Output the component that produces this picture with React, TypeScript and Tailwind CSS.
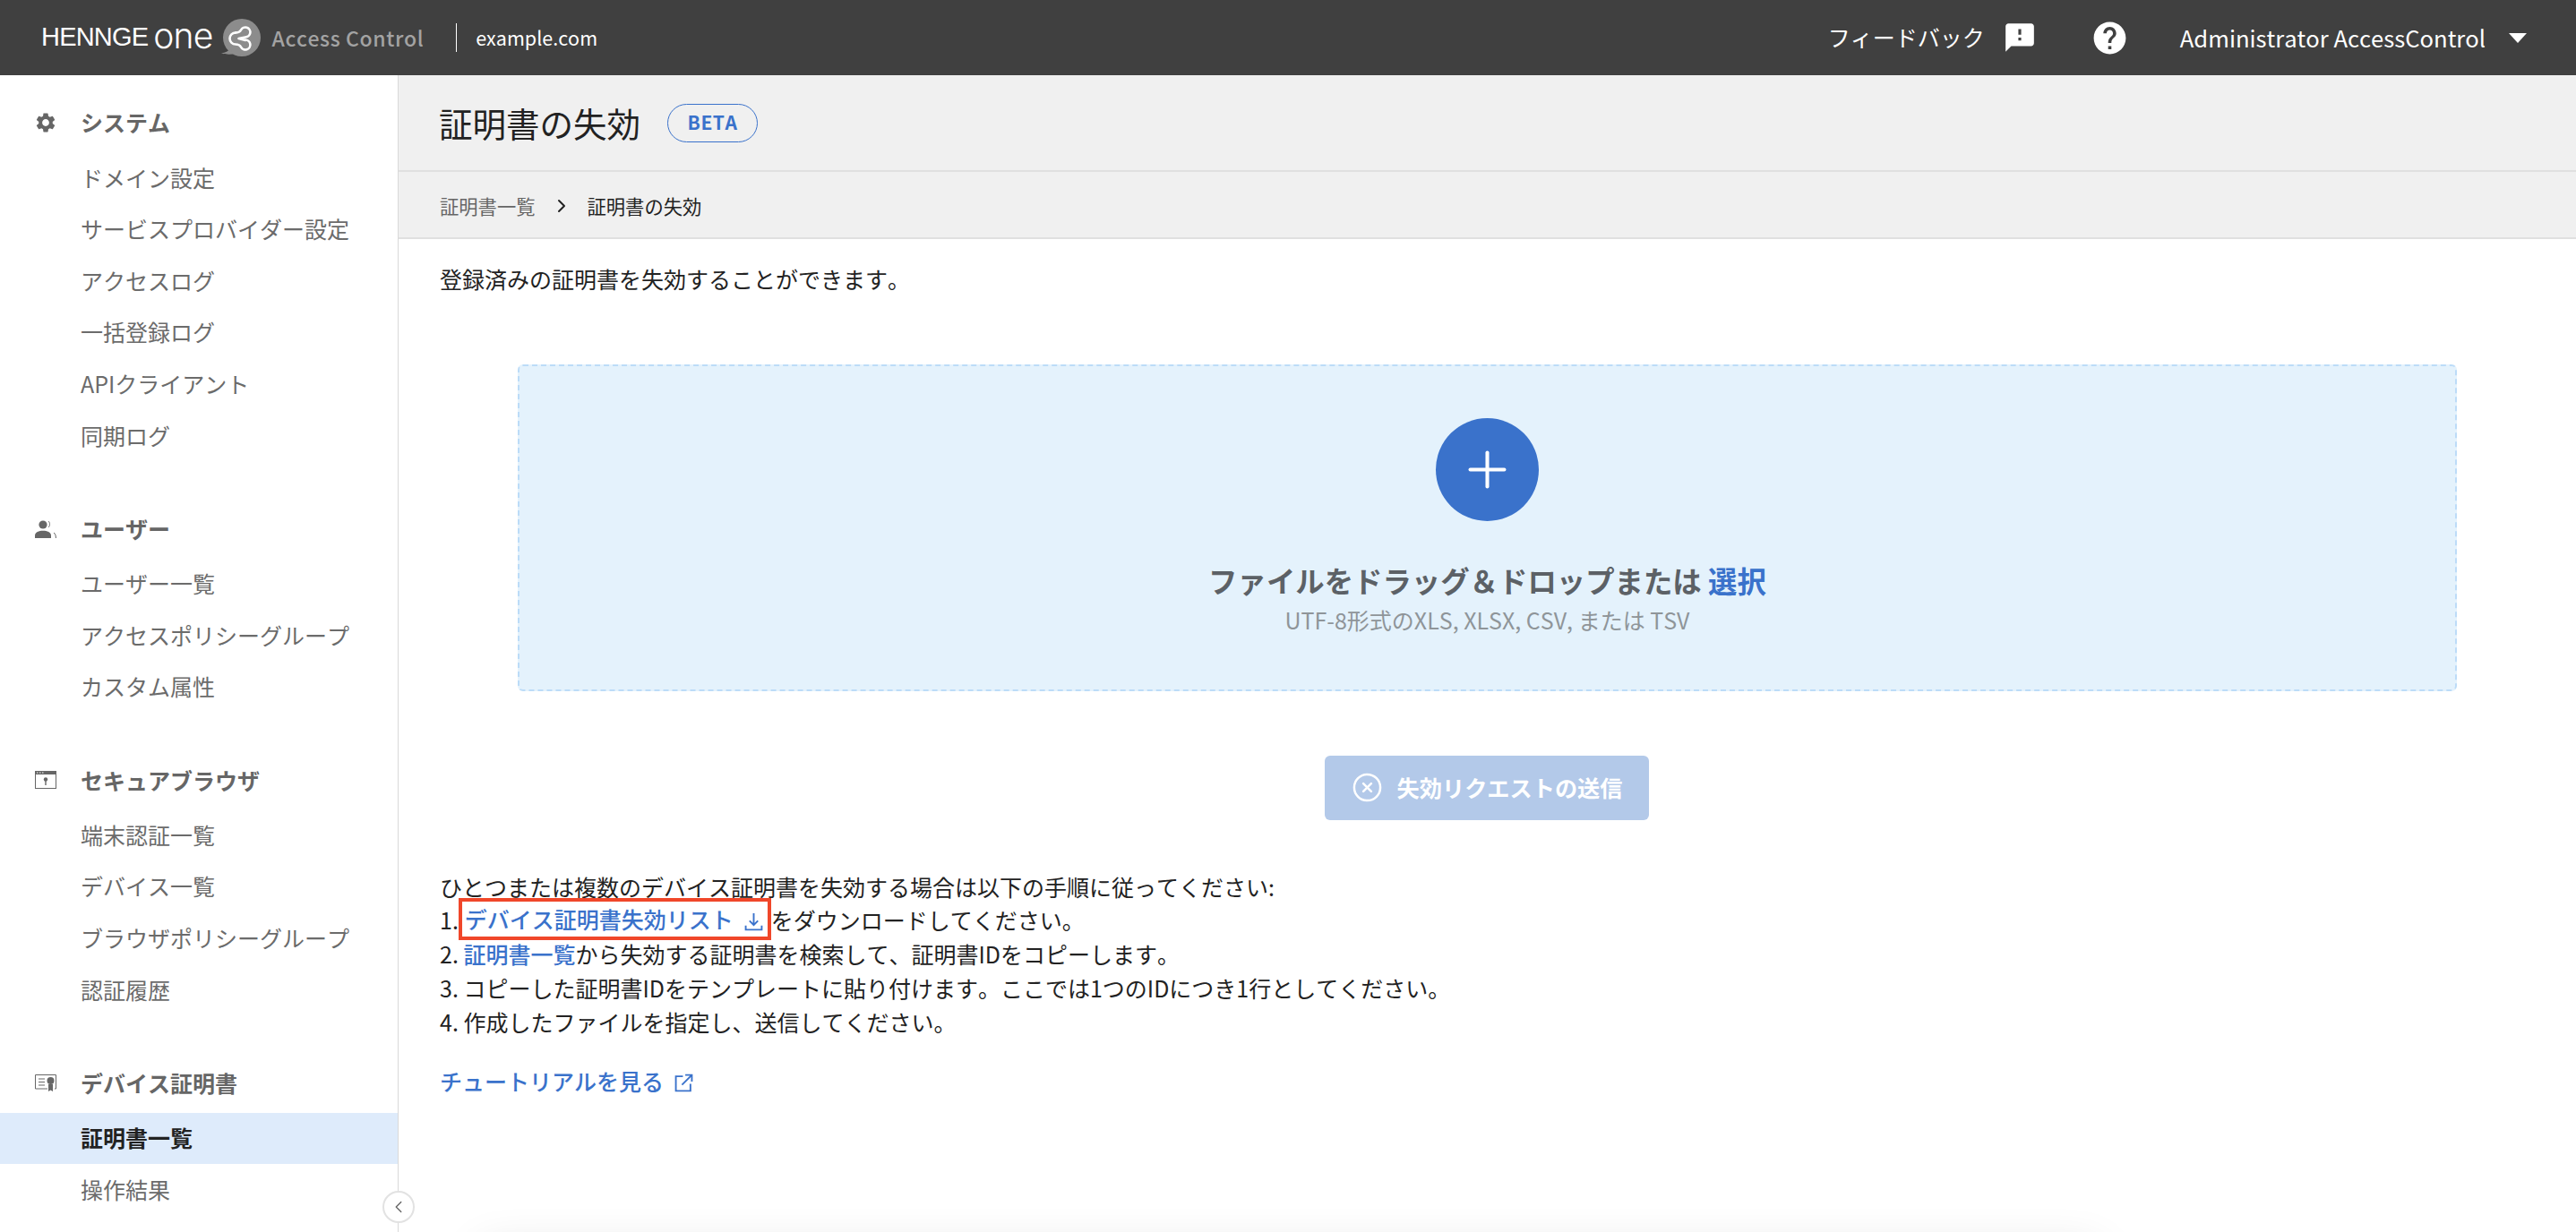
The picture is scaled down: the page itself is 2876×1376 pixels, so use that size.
import { ReactNode } from 'react';
import { MdFeedback, MdHelp, MdSettings } from 'react-icons/md';
import { ChevronLeft, ChevronRight, Plus, CircleX } from 'lucide-react';

function UsersIcon() {
  return (
    <svg viewBox="0 0 24 20" className="h-[20px] w-[24px]" fill="#666">
      <circle cx="9" cy="5" r="4.6" />
      <path d="M0 20v-3c0-3.4 4.5-5.2 9-5.2s9 1.8 9 5.2v3z" />
      <path d="M15 1c2 1.6 2 5.4 0 7M21 14c1.6 1 2.4 3 2.4 6" fill="none" stroke="#666" strokeWidth="1" />
    </svg>
  );
}

function BrowserIcon() {
  return (
    <svg viewBox="0 0 24 20" className="h-[20px] w-[24px]" fill="none">
      <rect x="0.5" y="0.5" width="23" height="19" stroke="#666" />
      <rect x="0" y="0" width="24" height="4" fill="#666" />
      <path d="M2 2h1.5M5 2h1.5M8 2h1.5" stroke="#fff" strokeWidth="1" />
      <circle cx="12" cy="9.5" r="2.2" fill="#666" />
      <path d="M12 10v6" stroke="#666" strokeWidth="1.4" />
    </svg>
  );
}

function CertIcon() {
  return (
    <svg viewBox="0 0 24 20" className="h-[20px] w-[24px]" fill="none">
      <path d="M14 16H0.5V0.5h23V16H22" stroke="#666" />
      <path d="M4 5h7M4 8.5h7M4 12h7" stroke="#666" strokeWidth="1.2" />
      <circle cx="17.5" cy="7" r="4" fill="#666" />
      <path d="M15 11h5v8l-2.5-1.6L15 19z" fill="#666" />
    </svg>
  );
}

function LogoMark() {
  return (
    <svg viewBox="0 0 46 42" className="h-[42px] w-[46px]">
      <circle cx="24" cy="21" r="21" fill="#8c8c8c" />
      <path d="M10 34c-1 2-4 4-9 4.5 5 1.5 11 1.5 16 .5z" fill="#8c8c8c" />
      <g fill="none" stroke="#fff" strokeWidth="2.6" strokeLinejoin="round" strokeLinecap="round">
        <path d="M17 15.5a6.5 6.5 0 0 0 0 13c3 0 5 1 6 3a5.5 5.5 0 1 0 5-8" />
        <path d="M17 15.5c3 0 5-1 6-3a5.5 5.5 0 1 1 5 8l-7.5 1.5 7.5 2" />
      </g>
    </svg>
  );
}

function DownloadIcon() {
  return (
    <svg viewBox="0 0 20 20" className="ml-[12px] inline-block h-[21px] w-[21px] align-[-3px]" fill="none" stroke="#3a72cb" strokeWidth="1.8">
      <path d="M10 1v12M5.5 9l4.5 4.5L14.5 9M1.5 14v4.5h17V14" />
    </svg>
  );
}

function ExternalIcon() {
  return (
    <svg viewBox="0 0 20 20" className="ml-[12px] inline-block h-[21px] w-[21px] align-[-2px]" fill="none" stroke="#3a72cb" strokeWidth="1.8">
      <path d="M9 3H1.5v15.5H17V11M8 12 18.5 1.5M11.5 1.5h7v7" />
    </svg>
  );
}

const navGroups: { title: string; icon: ReactNode; items: string[] }[] = [
  {
    title: 'システム',
    icon: <MdSettings className="-ml-[1px] text-[26px] text-[#666]" />,
    items: ['ドメイン設定', 'サービスプロバイダー設定', 'アクセスログ', '一括登録ログ', 'APIクライアント', '同期ログ'],
  },
  {
    title: 'ユーザー',
    icon: <UsersIcon />,
    items: ['ユーザー一覧', 'アクセスポリシーグループ', 'カスタム属性'],
  },
  {
    title: 'セキュアブラウザ',
    icon: <BrowserIcon />,
    items: ['端末認証一覧', 'デバイス一覧', 'ブラウザポリシーグループ', '認証履歴'],
  },
  {
    title: 'デバイス証明書',
    icon: <CertIcon />,
    items: ['証明書一覧', '操作結果'],
  },
];

function Sidebar() {
  return (
    <aside className="relative w-[445px] shrink-0 border-r border-[#d9d9d9] bg-white pt-[24px]">
      {navGroups.map((group) => (
        <div key={group.title} className="mb-[46px]">
          <div className="mb-[4px] flex h-[58px] items-center">
            <span className="flex w-[90px] shrink-0 pl-[39px]">{group.icon}</span>
            <span className="text-[25px] font-bold text-[#666]">{group.title}</span>
          </div>
          {group.items.map((item) => (
            <div
              key={item}
              className={
                item === '証明書一覧'
                  ? 'flex h-[57.6px] items-center bg-[#deebfb] pb-[1px] pl-[90px] text-[25px] font-bold text-[#222]'
                  : 'flex h-[57.6px] items-center pb-[1px] pl-[90px] text-[25px] text-[#6b6b6b]'
              }
            >
              {item}
            </div>
          ))}
        </div>
      ))}
      <button className="absolute top-[1246px] -right-[19px] z-10 flex h-[36px] w-[36px] items-center justify-center rounded-full border-2 border-[#e2e2e2] bg-white">
        <ChevronLeft className="h-[22px] w-[22px] text-[#666]" strokeWidth={1.5} />
      </button>
    </aside>
  );
}

function Header() {
  return (
    <header className="flex h-[84px] shrink-0 items-center bg-[#404040] pr-[55px] pl-[46px] text-white">
      <span className="text-[29px] tracking-[-0.8px] [font-family:Liberation_Sans,sans-serif]">HENNGE</span>
      <span className="ml-[6px] -translate-y-[3px] text-[39px] leading-none font-light tracking-[-0.8px] [font-family:Inter,sans-serif]">one</span>
      <span className="ml-[8px]"><LogoMark /></span>
      <span className="ml-[12px] text-[23px] font-medium tracking-[0.6px] text-[#a3a3a3]">Access Control</span>
      <span className="mr-[21px] ml-[36px] h-[32px] w-px bg-white" />
      <span className="text-[21.5px]">example.com</span>
      <div className="ml-auto flex items-center">
        <span className="text-[25px]">フィードバック</span>
        <MdFeedback className="ml-[20px] h-[38px] w-[38px]" />
        <MdHelp className="ml-[60px] h-[43px] w-[43px]" />
        <span className="ml-[57px] text-[25.6px]">Administrator AccessControl</span>
        <span className="ml-[26px] h-0 w-0 border-x-[10px] border-t-[11px] border-x-transparent border-t-white" />
      </div>
    </header>
  );
}

function DropZone() {
  return (
    <div className="mx-[133px] mt-[76px] flex h-[365px] flex-col items-center rounded-[6px] border-2 border-dashed border-[#bcdcf8] bg-[#e4f2fc] pt-[58px]">
      <div className="flex h-[115px] w-[115px] items-center justify-center rounded-full bg-[#3a72cb]">
        <Plus className="h-[65px] w-[65px] text-white" strokeWidth={1.5} />
      </div>
      <p className="mt-[46px] text-[32.4px] leading-[40px] font-bold text-[#5c6166]">
        ファイルをドラッグ＆ドロップまたは <span className="text-[#3a72cb]">選択</span>
      </p>
      <p className="mt-[7px] text-[25px] leading-[34px] text-[#8f9599]">UTF-8形式のXLS, XLSX, CSV, または TSV</p>
    </div>
  );
}

export default function App() {
  return (
    <div className="relative flex h-[1376px] w-[2876px] flex-col overflow-hidden bg-white text-[#222] [font-family:Noto_Sans_CJK_JP,sans-serif] [font-kerning:none]">
      <Header />
      <div className="flex min-h-0 flex-1">
        <Sidebar />
        <main className="relative flex-1 overflow-hidden">
          <div className="flex h-[108px] items-center border-b-2 border-[#e0e0e0] bg-[#f0f0f0] pl-[45px]">
            <h1 className="text-[37.5px] font-normal text-[#222]">証明書の失効</h1>
            <span className="ml-[30px] flex h-[43px] w-[101px] items-center justify-center rounded-full border border-[#3a72cb] text-[21px] font-bold tracking-[0.5px] text-[#3a72cb]">BETA</span>
          </div>
          <div className="flex h-[75px] items-center border-b-2 border-[#e0e0e0] bg-[#f0f0f0] pt-[3px] pl-[46px] text-[21.3px]">
            <span className="text-[#666]">証明書一覧</span>
            <ChevronRight className="mx-[17px] h-[24px] w-[24px] text-[#222]" strokeWidth={2} />
            <span>証明書の失効</span>
          </div>
          <p className="mt-[26px] pl-[46px] text-[25px] leading-[37.6px]">登録済みの証明書を失効することができます。</p>
          <DropZone />
          <div className="mt-[72px] flex justify-center pr-[1px]">
            <button className="flex h-[72px] w-[362px] items-center justify-center rounded-[6px] bg-[#b3c9e9] text-[25.2px] font-bold text-white">
              <CircleX className="mr-[16px] h-[35px] w-[35px]" strokeWidth={1.7} />
              失効リクエストの送信
            </button>
          </div>
          <div className="mt-[56px] pl-[46px] text-[25px] leading-[37.8px]">
            <p>ひとつまたは複数のデバイス証明書を失効する場合は以下の手順に従ってください:</p>
            <p>
              1.
              <span className="-mt-[6px] -mb-[4px] inline-block h-[47px] border-4 border-[#f0472a] pr-[5px] pl-[3px] align-top leading-[38px] font-medium text-[#3a72cb]">
                デバイス証明書失効リスト<DownloadIcon />
              </span>
              をダウンロードしてください。
            </p>
            <p>2. <span className="font-medium text-[#3a72cb]">証明書一覧</span>から失効する証明書を検索して、証明書IDをコピーします。</p>
            <p>3. コピーした証明書IDをテンプレートに貼り付けます。ここでは1つのIDにつき1行としてください。</p>
            <p>4. 作成したファイルを指定し、送信してください。</p>
          </div>
          <p className="mt-[28px] pl-[46px] text-[25px] leading-[37.8px] font-medium text-[#3a72cb]">
            チュートリアルを見る<ExternalIcon />
          </p>
          <div className="absolute top-[1310px] left-[90px] h-[60px] w-[1810px] rounded-[10px] shadow-[0_0_50px_rgba(0,0,0,0.12)]" />
        </main>
      </div>
    </div>
  );
}
